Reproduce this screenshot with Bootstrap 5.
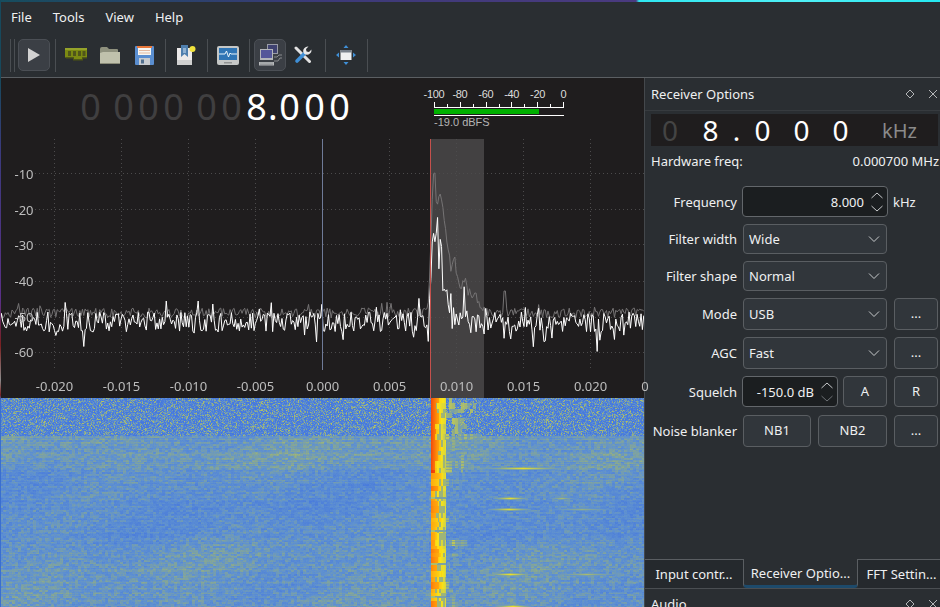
<!doctype html>
<html lang="en">
<head>
  <meta charset="utf-8">
  <meta name="viewport" content="width=device-width, initial-scale=1">
  <title>Gqrx</title>
  <link href="https://cdn.jsdelivr.net/npm/bootstrap@5.3.0/dist/css/bootstrap.min.css" rel="stylesheet">
  <style>
    html, body { margin: 0; height: 607px; overflow: hidden; background: #2a2e32; }
    body { position: relative; width: 940px; font: 13px/18px "Noto Sans", sans-serif; color: #eff0f1; }
    body::before { content: ""; position: absolute; z-index: 5; left: 0; top: 0; width: 1px; height: 100%;
      background: linear-gradient(#17495c 0, #17495c 80px, #3a3a7c 150px, #5a2f86 300px, #7a2020 345px, #8a8a8a 380px, #7a2020 395px, #3a6fd0 400px); }
    .desk-strip { height: 2px; background: linear-gradient(90deg, #164d5e 0, #3c3a78 320px, #4a3a80 636px, #2fe6f0 639px, #4ff0f6 800px, #25e8f0 940px); }
    .menu-row { height: 31px; padding-left: 11px; gap: 21px; }
    .menu-row .nav-link { padding: 0; color: #eff0f1; font-size: 13px; line-height: 30px; }
    .tool-row { height: 45px; border-bottom: 1px solid #5b5f63; padding-left: 10px; }
    .tool-handle { width: 1px; height: 33px; background: #4a4e52; margin-right: 3px; }
    .tool-sep { width: 1px; height: 33px; background: #4a4e52; margin: 0 3px 0 4px; }
    .tool-cell { width: 34px; height: 32px; }
    .tool-on { width: 32px; height: 32px; margin-left: 1px; background: #3b3f45; border: 1px solid #4b4f55; border-radius: 5px; }
    .tool-play { margin-left: 0; margin-right: 1px; }
    .work-area { height: 529px; }
    .left-pane { width: 644px; background: #1f1d1e; }
    .freq-row { height: 61px; padding-left: 78px; }
    .fdigit { width: 25px; text-align: center; font-size: 36px; line-height: 58px; color: #fff; }
    .fdigit-dim { color: #403f40; }
    .fgap { width: 8px; }
    .fdot { width: 9px; margin-left: -1px; text-align: center; font-size: 36px; line-height: 58px; color: #fff; }
    .meter-box { position: relative; width: 150px; height: 61px; margin-left: 74px; color: #c8c8c8; font: 11px/12px "Liberation Sans", sans-serif; }
    .meter-lbl { position: absolute; top: 10px; transform: translateX(-50%); color: #ddd; letter-spacing: -.3px; }
    .meter-svg { position: absolute; left: 0; top: 21px; }
    .meter-val { position: absolute; left: 8px; top: 38px; color: #b4b4b4; }
    .plot-box { position: relative; height: 259px; }
    .plot-box canvas, .fall-box canvas { display: block; }
    .axis-lbl { position: absolute; transform: translate(-50%, -50%); color: #bdbdbd; font-size: 13px; line-height: 16px; }
    .fall-box { height: 209px; overflow: hidden; }
    .right-pane { width: 296px; border-left: 1px solid #44484c; }
    .dock-head { height: 33px; padding: 7px 0 0 6px; border-bottom: 1px solid #373b3f; }
    .dock-btns { margin-left: auto; gap: 11px; padding-right: 1px; }
    .lcd-box { height: 32px; margin: 3px 2px 0 6px; background: #1f1d1e; padding-left: 5px; }
    .ldigit { width: 39px; text-align: center; font-size: 28px; line-height: 32px; color: #fff; }
    .ldigit-dim { color: #444; width: 28px; margin-right: 7px; }
    .ldot { width: 13px; text-align: center; font-size: 28px; line-height: 32px; color: #fff; }
    .lcd-unit { margin-left: auto; width: 56px; font-size: 20px; line-height: 34px; color: #8a8a8a; }
    .hw-row { margin: 6px 1px 0 6px; height: 18px; }
    .opt-list { margin-top: 16px; gap: 7px; }
    .opt-row { padding-right: 2px; }
    .h30 { height: 30px; } .h31 { height: 31px; } .h32 { height: 32px; }
    .opt-last { margin-top: 1px; }
    .opt-lbl { width: 92px; margin-right: 6px; text-align: right; flex: none; }
    .qt-select.form-select { width: 144px; height: 100%; padding: 1px 20px 0 5px; font-size: 13px; color: #eff0f1; background-color: #31363b; border: 1px solid #5a5e62; border-radius: 4px; background-position: right 6px center; background-size: 12px 8px;
      --bs-form-select-bg-img: url("data:image/svg+xml,%3csvg xmlns='http://www.w3.org/2000/svg' viewBox='0 0 12 8'%3e%3cpath fill='none' stroke='%23c8cacc' d='M1 1.5l5 5 5-5'/%3e%3c/svg%3e"); }
    .qt-spin { height: 100%; margin-left: -1px; padding: 0 3px 0 5px; background: #1b1e20; border: 1px solid #63676b; border-radius: 4px; }
    .spin-wide { width: 146px; }
    .spin-small { width: 96px; padding-left: 11px; }
    .spin-text { margin-left: auto; margin-right: 6px; }
    .qt-btn.btn { height: 100%; padding: 0; font-size: 13px; color: #eff0f1; background: #31363b; border: 1px solid #5a5e62; border-radius: 4px; }
    .w44 { width: 44px; } .ms7 { margin-left: 7px; } .ms5 { margin-left: 5px; } .w68 { width: 68px; } .w69 { width: 69px; }
    .dock-tabs { margin-top: auto; height: 30px; border-bottom: 1px solid #4a4e52; flex-wrap: nowrap; }
    .dock-tabs .nav-link { height: 29px; padding: 0; text-align: center; line-height: 29px; color: #eff0f1; font-size: 13px; background: #25292d; border: 0; border-top: 1px solid #5a5e62; border-radius: 0; }
    .dock-tabs .nav-link.active { background: #2a2e32; color: #eff0f1; border: 1px solid #5a5e62; border-top: 0; border-bottom: 3px solid #1d4a6b; border-radius: 0 0 4px 4px; }
    .tab-a { width: 98px; } .tab-b { width: 115px; } .tab-c.nav-link { width: 82px; padding-left: 5px; }
    .audio-head { height: 18px; padding: 6px 0 0 6px; overflow: hidden; }
  </style>
</head>

<body>
  <div class="desk-strip"></div>

  <!-- Menu -->
  <nav class="nav menu-row">
    <a class="nav-link" href="#">File</a>
    <a class="nav-link" href="#">Tools</a>
    <a class="nav-link" href="#">View</a>
    <a class="nav-link" href="#">Help</a>
  </nav>

  <!-- Toolbar -->
  <div class="d-flex align-items-center tool-row">
    <div class="tool-handle"></div>
    <div class="tool-handle"></div>
    <div class="tool-on tool-play d-flex align-items-center justify-content-center">
      <svg width="14" height="16" viewBox="0 0 14 16"><path d="M1 1l12 7-12 7z" fill="#d2d2d2"/></svg>
    </div>
    <div class="tool-sep"></div>
    <div class="tool-cell d-flex align-items-center justify-content-center">
      <svg width="24" height="16" viewBox="0 0 24 16"><path d="M1 1h22v9.500H18v2h-8v-2H1z" fill="#7b8a12"/><path d="M1 1h22v2H1z" fill="#95a32a"/><path d="M4 4h3v5H4zm5 0h3v5H9zm5 0h3v5h-3zm4.500 0h3v5h-3z" fill="#50561a"/><path d="M2 10.500h8v2h8v-2h5v1h-4v2H9v-2H2z" fill="#4d5510"/></svg>
    </div>
    <div class="tool-cell d-flex align-items-center justify-content-center">
      <svg width="22" height="19" viewBox="0 0 22 19"><path d="M1 3q0-2 2-2h5l2 2h8q1 0 1 1v3H1z" fill="#8f917e"/><path d="M1 18V7l3-1h17v11q0 1-1 1z" fill="#c0c1ac"/><path d="M1 18h20v-1H1z" fill="#8a8b78"/></svg>
    </div>
    <div class="tool-cell d-flex align-items-center justify-content-center">
      <svg width="19" height="19" viewBox="0 0 19 19"><path d="M0 1q0-1 1-1h17q1 0 1 1v17q0 1-1 1H1q-1 0-1-1z" fill="#5a8ed0"/><path d="M2 0h15v2H2z" fill="#e8773a"/><path d="M3 2h13v7H3z" fill="#f6f6f2"/><path d="M4 4h11v1H4zm0 2.500h11v1H4z" fill="#e3b9a0"/><path d="M4 12h11v7H4z" fill="#c8ccd0"/><path d="M6 13.500h3v4H6z" fill="#52708f"/></svg>
    </div>
    <div class="tool-sep"></div>
    <div class="tool-cell d-flex align-items-center justify-content-center">
      <svg width="20" height="21" viewBox="0 0 20 21"><path d="M1 3h15v17H1z" fill="#eceaea"/><path d="M1 15h15v5H1z" fill="#d0d0d0"/><path d="M5 0h7v12l-3.500-3L5 12z" fill="#4f7fae"/><path d="M7 3h3v5H7z" fill="#8fb1d2"/><circle cx="16.500" cy="4" r="3" fill="#f0e23c"/></svg>
    </div>
    <div class="tool-sep"></div>
    <div class="tool-cell d-flex align-items-center justify-content-center">
      <svg width="22" height="19" viewBox="0 0 22 19"><rect x="0" y="0" width="22" height="19" rx="2" fill="#c5c7c6"/><rect x="2" y="2" width="18" height="12" fill="#2f75b5"/><path d="M2 8h6l1.500-3 2 6 1.500-4 1 1h6" fill="none" stroke="#e8f4fa" stroke-width="1"/><path d="M7 16h8v1.500H7z" fill="#909292"/></svg>
    </div>
    <div class="tool-sep"></div>
    <div class="tool-on d-flex align-items-center justify-content-center">
      <svg width="23" height="22" viewBox="0 0 23 22"><rect x="8" y="0" width="11" height="10" fill="#9a9ca6"/><rect x="9" y="1" width="9" height="8" fill="#3f4270"/><rect x="1" y="5" width="13" height="11" fill="#b4b6ba"/><rect x="2" y="6" width="11" height="8" fill="#55579a"/><path d="M0 18h15v3.500H0z" fill="#b6b8ba"/><path d="M1 19h13M1 20.500h13" stroke="#85878a" stroke-width=".6"/><path d="M15 13h3l2-2h3M15 17h4l2-3h2" fill="none" stroke="#8a8c8f"/></svg>
    </div>
    <div class="tool-cell d-flex align-items-center justify-content-center">
      <svg width="18" height="18" viewBox="0 0 18 18"><path d="M2 2l13.500 13.500" stroke="#e2e2e2" stroke-width="3" stroke-linecap="round"/><path d="M11 7L3 15" stroke="#3f8fd6" stroke-width="3.600" stroke-linecap="round"/><path d="M10 7.500a4.500 4.500 0 0 1 .5-5.500 4.500 4.500 0 0 1 4-1.500L12 3l.5 2.500L15 6l2.500-2.500a4.500 4.500 0 0 1-1.500 4 4.500 4.500 0 0 1-5.500.5z" fill="#e8e8e8"/></svg>
    </div>
    <div class="tool-sep ms5"></div>
    <div class="tool-cell d-flex align-items-center justify-content-center">
      <svg width="20" height="20" viewBox="0 0 20 20"><rect x="4.500" y="5" width="11" height="10" fill="#f0f0f0"/><rect x="4.500" y="5" width="11" height="2.500" fill="#79808a"/><path d="M10 0l2.500 3h-5zM10 20l2.500-3h-5zM0 10l3-2.500v5zM20 10l-3-2.500v5z" fill="#3f8fd6"/></svg>
    </div>
    <div class="tool-sep"></div>
  </div>

  <div class="d-flex work-area">
    <!-- Left side: frequency, plot and waterfall -->
    <div class="left-pane">
      <div class="d-flex freq-row">
        <span class="fdigit fdigit-dim">0</span><span class="fgap"></span>
        <span class="fdigit fdigit-dim">0</span><span class="fdigit fdigit-dim">0</span><span class="fdigit fdigit-dim">0</span><span class="fgap"></span>
        <span class="fdigit fdigit-dim">0</span><span class="fdigit fdigit-dim">0</span><span class="fdigit">8</span>
        <span class="fdot">.</span>
        <span class="fdigit">0</span><span class="fdigit">0</span><span class="fdigit">0</span>
        <div class="meter-box" id="meterBox">
          <svg class="meter-svg" width="150" height="20" viewBox="0 0 150 20" id="meterSvg"></svg>
          <span class="meter-val">-19.0 dBFS</span>
        </div>
      </div>
      <div class="plot-box" id="plotBox"><canvas id="plotCanvas" width="644" height="259"></canvas></div>
      <div class="fall-box"><canvas id="fallCanvas" width="644" height="209"></canvas></div>
    </div>

    <!-- Receiver options dock -->
    <div class="right-pane d-flex flex-column">
      <div class="d-flex dock-head">
        <span>Receiver Options</span>
        <div class="d-flex dock-btns">
          <svg width="12" height="18" viewBox="0 0 12 18"><path d="M6 5l4 4-4 4-4-4z" fill="none" stroke="#b4b6b8"/></svg>
          <svg width="12" height="18" viewBox="0 0 12 18"><path d="M2 5l8 8M10 5l-8 8" fill="none" stroke="#b4b6b8"/></svg>
        </div>
      </div>
      <div class="d-flex lcd-box">
        <span class="ldigit ldigit-dim">0</span>
        <span class="ldigit">8</span>
        <span class="ldot">.</span>
        <span class="ldigit">0</span><span class="ldigit">0</span><span class="ldigit">0</span>
        <span class="lcd-unit">kHz</span>
      </div>
      <div class="d-flex justify-content-between hw-row">
        <span>Hardware freq:</span><span>0.000700 MHz</span>
      </div>

      <div class="d-flex flex-column opt-list">
        <div class="d-flex align-items-center opt-row h31">
          <label class="opt-lbl">Frequency</label>
          <div class="d-flex align-items-center qt-spin spin-wide">
            <span class="spin-text">8.000</span>
            <svg width="14" height="24" viewBox="0 0 14 24"><path d="M1.500 8l5.500-5 5.500 5M1.500 16l5.500 5 5.500-5" fill="none" stroke="#c8cacc"/></svg>
          </div>
          <span class="ms5">kHz</span>
        </div>
        <div class="d-flex align-items-center opt-row h30">
          <label class="opt-lbl">Filter width</label>
          <select class="form-select qt-select"><option>Wide</option></select>
        </div>
        <div class="d-flex align-items-center opt-row h30">
          <label class="opt-lbl">Filter shape</label>
          <select class="form-select qt-select"><option>Normal</option></select>
        </div>
        <div class="d-flex align-items-center opt-row h32">
          <label class="opt-lbl">Mode</label>
          <select class="form-select qt-select"><option>USB</option></select>
          <button type="button" class="btn qt-btn w44 ms7">...</button>
        </div>
        <div class="d-flex align-items-center opt-row h32">
          <label class="opt-lbl">AGC</label>
          <select class="form-select qt-select"><option>Fast</option></select>
          <button type="button" class="btn qt-btn w44 ms7">...</button>
        </div>
        <div class="d-flex align-items-center opt-row h31">
          <label class="opt-lbl">Squelch</label>
          <div class="d-flex align-items-center qt-spin spin-small">
            <span class="spin-text text-nowrap">-150.0 dB</span>
            <svg width="14" height="24" viewBox="0 0 14 24"><path d="M1.500 8l5.500-5 5.500 5" fill="none" stroke="#c8cacc"/><path d="M1.500 16l5.500 5 5.500-5" fill="none" stroke="#6c7074"/></svg>
          </div>
          <button type="button" class="btn qt-btn w44 ms5">A</button>
          <button type="button" class="btn qt-btn w44 ms7">R</button>
        </div>
        <div class="d-flex align-items-center opt-row h32 opt-last">
          <label class="opt-lbl">Noise blanker</label>
          <button type="button" class="btn qt-btn w68">NB1</button>
          <button type="button" class="btn qt-btn w69 ms7">NB2</button>
          <button type="button" class="btn qt-btn w44 ms7">...</button>
        </div>
      </div>

      <ul class="nav nav-tabs dock-tabs">
        <li class="nav-item"><a class="nav-link tab-a" href="#">Input contr...</a></li>
        <li class="nav-item"><a class="nav-link active tab-b" href="#">Receiver Optio...</a></li>
        <li class="nav-item"><a class="nav-link tab-c" href="#">FFT Settin...</a></li>
      </ul>
      <div class="d-flex audio-head">
        <span>Audio</span>
        <div class="d-flex dock-btns">
          <svg width="12" height="18" viewBox="0 0 12 18"><path d="M6 5l4 4-4 4-4-4z" fill="none" stroke="#b4b6b8"/></svg>
          <svg width="12" height="18" viewBox="0 0 12 18"><path d="M2 5l8 8M10 5l-8 8" fill="none" stroke="#b4b6b8"/></svg>
        </div>
      </div>
    </div>
  </div>

  <script>
    // seeded random so that every run draws the same noise
    let seed = 12345;
    function rnd() {
      seed = (seed + 0x6D2B79F5) | 0;
      let t = Math.imul(seed ^ (seed >>> 15), 1 | seed);
      t = (t + Math.imul(t ^ (t >>> 7), 61 | t)) ^ t;
      return ((t ^ (t >>> 14)) >>> 0) / 4294967296;
    }

    // S-meter scale
    const meterBox = document.getElementById('meterBox');
    const meterSvg = document.getElementById('meterSvg');
    let meterHtml = '<path d="M8 8.500h130M8 16.500h130" stroke="#fff"/><rect x="8" y="10" width="105" height="5" fill="#00b000"/>';
    for (let i = 0; i <= 10; i++) {
      let x = Math.round(8 + i * 12.9) + 0.5;
      meterHtml += '<path d="M' + x + ' ' + (i % 2 ? 5 : 3) + 'V8" stroke="#fff"/>';
    }
    meterSvg.innerHTML = meterHtml;
    ['-100', '-80', '-60', '-40', '-20', '0'].forEach(function (txt, i) {
      let s = document.createElement('span');
      s.className = 'meter-lbl';
      s.textContent = txt;
      s.style.left = (8 + i * 25.9) + 'px';
      meterBox.appendChild(s);
    });

    // Spectrum plot
    const plotBox = document.getElementById('plotBox');
    const ctx = document.getElementById('plotCanvas').getContext('2d');
    const top0 = 139;
    ctx.fillStyle = '#1f1d1e';
    ctx.fillRect(0, 0, 644, 259);
    ctx.fillStyle = '#434142';
    ctx.fillRect(431, 0, 53, 259);

    ctx.strokeStyle = '#4c4b4c';
    ctx.setLineDash([1, 3]);
    [173, 209, 244, 281, 317, 352].forEach(function (y) {
      ctx.beginPath(); ctx.moveTo(35, y - top0 + 0.5); ctx.lineTo(644, y - top0 + 0.5); ctx.stroke();
    });
    [54, 121, 188, 255, 389, 456, 523, 590].forEach(function (x) {
      ctx.beginPath(); ctx.moveTo(x + 0.5, 0); ctx.lineTo(x + 0.5, 231); ctx.stroke();
    });
    ctx.setLineDash([]);

    function interp(pts, x) {
      for (let i = 1; i < pts.length; i++) {
        if (x <= pts[i][0]) {
          let a = pts[i - 1], b = pts[i];
          return a[1] + (b[1] - a[1]) * (x - a[0]) / (b[0] - a[0]);
        }
      }
      return pts[pts.length - 1][1];
    }
    const grayPeak = [[428, 312], [431, 235], [434, 165], [437, 205], [439, 190], [443, 215], [447, 240], [451, 270], [455, 262], [460, 285], [466, 280], [470, 298], [476, 295], [482, 310], [486, 314], [900, 312]];
    const whitePeak = [[429, 322], [431, 270], [433, 228], [436, 238], [440, 262], [444, 290], [450, 308], [458, 318], [900, 322]];

    let grayPts = [], whitePts = [];
    for (let x = 0; x <= 645; x += 1.33) {
      let g = 313 + (rnd() - 0.5) * 10;
      if (rnd() < 0.05) g -= 6;
      let w = 322 + (rnd() - 0.5) * 20;
      if (rnd() < 0.15) w += (rnd() - 0.45) * 38;
      if (x > 428 && x < 486) {
        g = Math.min(g, interp(grayPeak, x) + (rnd() - 0.5) * 14);
        let wp = interp(whitePeak, x);
        w = wp + (rnd() - 0.5) * 18;
        if (rnd() < 0.25) w += 14;
        if (x > 436 && rnd() < 0.15) w -= 24;
      } else if (x >= 503 && x < 506) {
        g = 291;
      }
      grayPts.push([x, g - top0]);
      whitePts.push([x, w - top0]);
    }
    function drawLine(pts, color) {
      ctx.strokeStyle = color;
      ctx.lineWidth = 1;
      ctx.beginPath();
      pts.forEach(function (p, i) { i ? ctx.lineTo(p[0], p[1]) : ctx.moveTo(p[0], p[1]); });
      ctx.stroke();
    }
    drawLine(grayPts, '#757374');
    drawLine(whitePts, '#ffffff');

    ctx.fillStyle = '#6f7b98';
    ctx.fillRect(322, 0, 1, 231);
    ctx.fillStyle = '#c4504c';
    ctx.fillRect(430, 0, 1, 259);

    function addLabel(txt, x, y) {
      let s = document.createElement('span');
      s.className = 'axis-lbl';
      s.textContent = txt;
      s.style.left = x + 'px';
      s.style.top = (y - top0) + 'px';
      plotBox.appendChild(s);
    }
    [-10, -20, -30, -40, -50, -60].forEach(function (db, i) {
      addLabel(String(db), 24, [174, 210, 245, 281, 317, 352][i]);
    });
    ['-0.020', '-0.015', '-0.010', '-0.005', '0.000', '0.005', '0.010', '0.015', '0.020'].forEach(function (t, i) {
      addLabel(t, 54.5 + i * 67, 386);
    });
    addLabel('0', 645, 386);

    // Waterfall
    const fctx = document.getElementById('fallCanvas').getContext('2d');
    const img = fctx.createImageData(644, 209);
    const stops = [[0, 60, 110, 228], [0.3, 95, 145, 208], [0.48, 140, 170, 140], [0.64, 208, 210, 70], [0.74, 250, 228, 22], [0.88, 255, 150, 10], [1, 240, 55, 10]];
    function setColor(i, v) {
      v = Math.max(0, Math.min(1, v));
      let k = 1;
      while (k < stops.length - 1 && v > stops[k][0]) k++;
      let a = stops[k - 1], b = stops[k], t = (v - a[0]) / (b[0] - a[0]);
      img.data[i] = a[1] + (b[1] - a[1]) * t;
      img.data[i + 1] = a[2] + (b[2] - a[2]) * t;
      img.data[i + 2] = a[3] + (b[3] - a[3]) * t;
      img.data[i + 3] = 255;
    }
    // streaks right of the signal: y, start x, end x, level
    const streaks = [[70, 485, 560, 0.7], [100, 493, 527, 0.7], [100, 548, 575, 0.55], [111, 488, 530, 0.68], [111, 548, 615, 0.5], [176, 490, 530, 0.72], [176, 553, 620, 0.55], [208, 495, 530, 0.72]];

    // smeared noise blocks, two rows high and three bins wide
    let blocks = [];
    let burstA = 1, burstLen = 20, burstLeft = 0, coreW = 6, sprayRow = [];
    for (let y = 0; y < 209; y++) {
      let rowOff = (rnd() - 0.5) * 0.07 + 0.03 * Math.sin(y / 23);
      if (burstLeft-- <= 0) {
        burstLeft = 2 + Math.floor(rnd() * 5);
        burstA = y < 72 ? 1 : 0.82 + rnd() * 0.1;
        burstLen = y < 72 ? 22 + rnd() * 30 : 10 + rnd() * rnd() * 40;
        coreW = 4 + Math.floor(rnd() * 5);
        sprayRow = [];
        for (let j = 0; j < 30; j++) sprayRow.push(rnd());
      }
      if (y % 2 === 0) {
        blocks = [];
        for (let j = 0; j < 220; j++) blocks.push(rnd());
      }
      for (let x = 0; x < 644; x++) {
        let v;
        if (y < 38) {
          let r = rnd();
          v = 0.08 + r * r * 0.5;
        } else {
          v = 0.22 + blocks[Math.floor(x / 3)] * 0.17 + (rnd() - 0.5) * 0.06 + rowOff;
          v += 0.04 * Math.sin(x / 37 + y / 19) * Math.sin(y / 41 - x / 90);
          if (y < 72) v += 0.03;
        }
        if (x >= 431) {
          let d = x - 431, s = 0;
          let lowRow = y >= 72 && y % 33 < 2;
          if (d < coreW) {
            s = y < 72 ? 0.97 - d * 0.015 : burstA - d * 0.008;
            if (lowRow) s = 0.56;
          } else if (d < 15) {
            let j = sprayRow[Math.floor(d / 2)];
            s = j < 0.3 ? 0.52 : 0.84 - (d - coreW) * 0.018 - j * 0.08;
            if (lowRow) s = 0.42;
          } else if (d < burstLen) {
            let j = sprayRow[Math.floor(d / 3) % 30];
            s = j < 0.5 ? (0.42 + j * 0.55) * (1 - d / burstLen * 0.25) : 0;
            if (y >= 38 && y % 3 === 2) s *= 0.8;
          }
          if (s > v) v = s;
        }
        streaks.forEach(function (st) {
          if (x >= st[1] && x <= st[2] && Math.abs(y - st[0]) <= 1) {
            let c = (st[1] + st[2]) / 2, w = (st[2] - st[1]) / 2;
            let fall = 1 - Math.abs(x - c) / w * 0.5;
            let k = Math.abs(y - st[0]) === 1 ? 0.72 : 1;
            v = Math.max(v, st[3] * fall * k);
          }
        });
        setColor((y * 644 + x) * 4, v);
      }
    }
    fctx.putImageData(img, 0, 0);
  </script>

  <script src="https://cdn.jsdelivr.net/npm/bootstrap@5.3.0/dist/js/bootstrap.bundle.min.js"></script>
</body>
</html>
